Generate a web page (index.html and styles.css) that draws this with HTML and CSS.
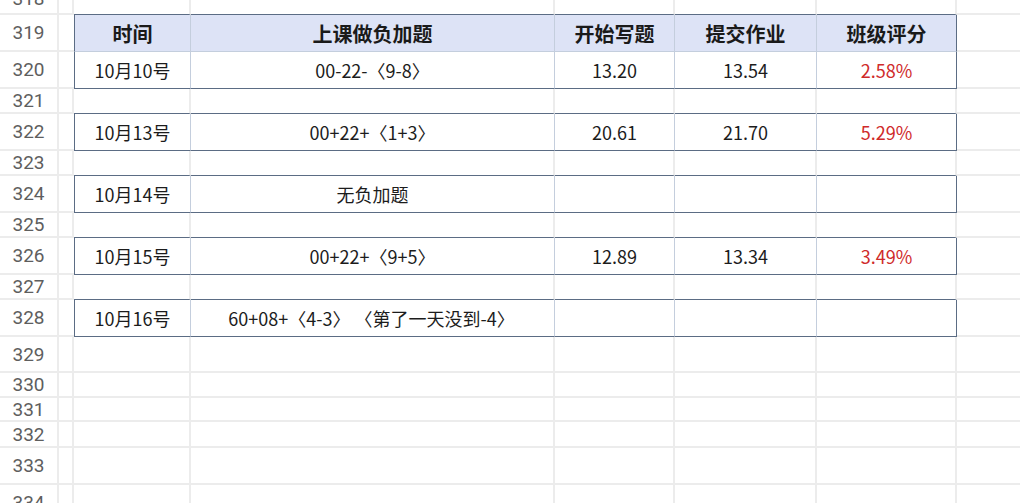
FILE: index.html
```html
<!DOCTYPE html>
<html lang="zh">
<head>
<meta charset="utf-8">
<title>Sheet</title>
<link rel="stylesheet" href="styles.css">
</head>
<body>
<div class="sheet">
  <div class="row h15 top pre">
    <div class="rn"><span>318</span></div><div class="c"></div><div class="c"></div><div class="c"></div><div class="c"></div><div class="c"></div><div class="c"></div><div class="c last"></div>
  </div>
  <div class="row h37 tbl head">
    <div class="rn">319</div><div class="c a"></div>
    <div class="c t first">时间</div><div class="c t">上课做负加题</div><div class="c t">开始写题</div><div class="c t">提交作业</div><div class="c t end">班级评分</div>
    <div class="c last"></div>
  </div>
  <div class="row h37 tbl">
    <div class="rn">320</div><div class="c a"></div>
    <div class="c t first">10月10号</div><div class="c t">00-22-〈9-8〉</div><div class="c t">13.20</div><div class="c t">13.54</div><div class="c t end red">2.58%</div>
    <div class="c last"></div>
  </div>
  <div class="row h25 pre">
    <div class="rn">321</div><div class="c"></div><div class="c"></div><div class="c"></div><div class="c"></div><div class="c"></div><div class="c"></div><div class="c last"></div>
  </div>
  <div class="row h37 tbl">
    <div class="rn">322</div><div class="c a"></div>
    <div class="c t first">10月13号</div><div class="c t">00+22+〈1+3〉</div><div class="c t">20.61</div><div class="c t">21.70</div><div class="c t end red">5.29%</div>
    <div class="c last"></div>
  </div>
  <div class="row h25 pre">
    <div class="rn">323</div><div class="c"></div><div class="c"></div><div class="c"></div><div class="c"></div><div class="c"></div><div class="c"></div><div class="c last"></div>
  </div>
  <div class="row h37 tbl">
    <div class="rn">324</div><div class="c a"></div>
    <div class="c t first">10月14号</div><div class="c t">无负加题</div><div class="c t"></div><div class="c t"></div><div class="c t end"></div>
    <div class="c last"></div>
  </div>
  <div class="row h25 pre">
    <div class="rn">325</div><div class="c"></div><div class="c"></div><div class="c"></div><div class="c"></div><div class="c"></div><div class="c"></div><div class="c last"></div>
  </div>
  <div class="row h37 tbl">
    <div class="rn">326</div><div class="c a"></div>
    <div class="c t first">10月15号</div><div class="c t">00+22+〈9+5〉</div><div class="c t">12.89</div><div class="c t">13.34</div><div class="c t end red">3.49%</div>
    <div class="c last"></div>
  </div>
  <div class="row h25 pre">
    <div class="rn">327</div><div class="c"></div><div class="c"></div><div class="c"></div><div class="c"></div><div class="c"></div><div class="c"></div><div class="c last"></div>
  </div>
  <div class="row h37 tbl">
    <div class="rn">328</div><div class="c a"></div>
    <div class="c t first">10月16号</div><div class="c t shift">60+08+〈4-3〉 〈第了一天没到-4〉</div><div class="c t"></div><div class="c t"></div><div class="c t end"></div>
    <div class="c last"></div>
  </div>
  <div class="row h36">
    <div class="rn">329</div><div class="c"></div><div class="c"></div><div class="c"></div><div class="c"></div><div class="c"></div><div class="c"></div><div class="c last"></div>
  </div>
  <div class="row h25">
    <div class="rn">330</div><div class="c"></div><div class="c"></div><div class="c"></div><div class="c"></div><div class="c"></div><div class="c"></div><div class="c last"></div>
  </div>
  <div class="row h24">
    <div class="rn">331</div><div class="c"></div><div class="c"></div><div class="c"></div><div class="c"></div><div class="c"></div><div class="c"></div><div class="c last"></div>
  </div>
  <div class="row h26">
    <div class="rn">332</div><div class="c"></div><div class="c"></div><div class="c"></div><div class="c"></div><div class="c"></div><div class="c"></div><div class="c last"></div>
  </div>
  <div class="row h37">
    <div class="rn">333</div><div class="c"></div><div class="c"></div><div class="c"></div><div class="c"></div><div class="c"></div><div class="c"></div><div class="c last"></div>
  </div>
  <div class="row h37">
    <div class="rn">334</div><div class="c"></div><div class="c"></div><div class="c"></div><div class="c"></div><div class="c"></div><div class="c"></div><div class="c last"></div>
  </div>
</div>
</body>
</html>
```

FILE: styles.css
```css
html, body {
  margin: 0;
  padding: 0;
  background: #ffffff;
  overflow: hidden;
}

.sheet {
  width: 1020px;
  height: 503px;
  overflow: hidden;
  font-family: "Noto Sans CJK SC", "Noto Sans", sans-serif;
}

.row {
  display: grid;
  grid-template-columns: 59px 15px 117px 364px 120px 142px 140px 1fr;
}

.h15 { height: 15px; }
.h24 { height: 24px; }
.h25 { height: 25px; }
.h26 { height: 26px; }
.h36 { height: 36px; }
.h37 { height: 37px; }

.rn, .c {
  box-sizing: border-box;
  border-right: 2px solid #ececec;
  border-bottom: 2px solid #ececec;
  overflow: hidden;
}

.rn {
  display: flex;
  align-items: center;
  justify-content: center;
  font-family: Roboto, "Noto Sans", sans-serif;
  font-size: 19px;
  color: #5e5e5e;
  white-space: nowrap;
}

.top .rn {
  align-items: flex-end;
}

.top .rn span {
  display: block;
  line-height: 29px;
  height: 29px;
  flex: none;
}

.c.last {
  border-right: none;
}

/* row preceding a bordered block: its bottom edge is the block's top border */
.pre .c:nth-child(n+3):nth-child(-n+7) {
  border-bottom: 1px solid #5b6c84;
}

.tbl .c.a {
  border-right: none;
}

.c.t {
  display: flex;
  align-items: center;
  justify-content: center;
  font-size: 18px;
  color: #1c1c1c;
  white-space: nowrap;
  border-right: 1px solid #c4cedd;
  border-bottom: 1px solid #5b6c84;
}

.c.t.shift {
  padding-right: 2px;
}

.c.t.first {
  border-left: 1px solid #5b6c84;
}

.c.t.end {
  border-right: 1px solid #5b6c84;
}

.head .c.t {
  background: #dde3f6;
  font-weight: bold;
  font-size: 20px;
  color: #1a1a1a;
  border-bottom: 1px solid #c4cedd;
}

.c.t.red {
  color: #cf2a2a;
}
```
